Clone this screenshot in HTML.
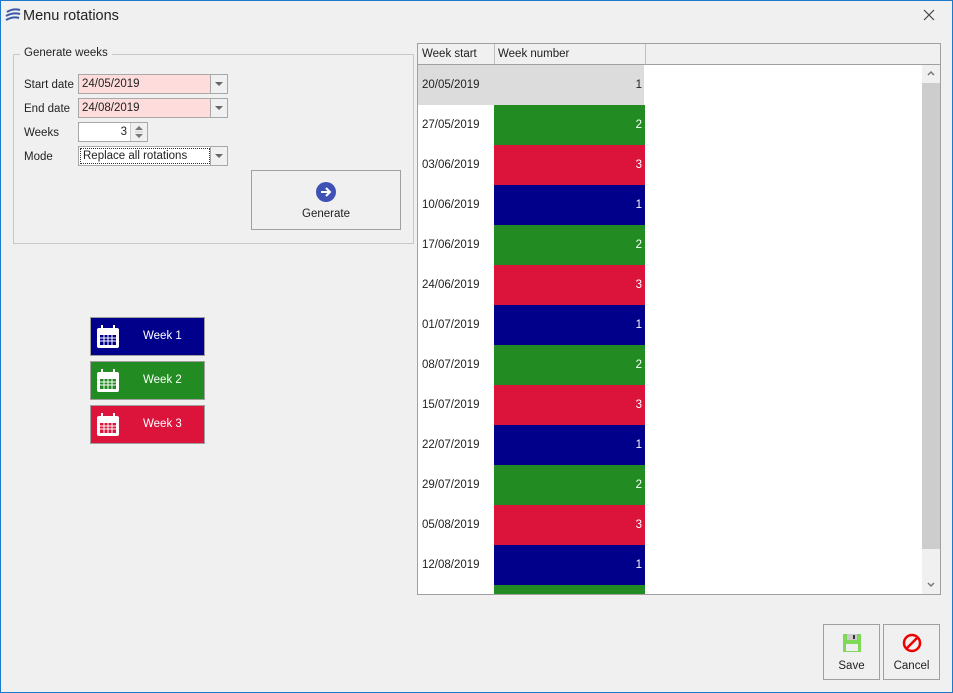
<!DOCTYPE html>
<html><head><style>
body{margin:0;width:953px;height:693px;overflow:hidden;font-family:"Liberation Sans",sans-serif;font-size:11.5px;color:#222;background:#f0f0f0;position:relative;}
.brd{position:absolute;left:0;top:0;width:951px;height:691px;border:1px solid #1979ca;}
.wrap{position:absolute;left:1px;top:1px;width:951px;height:691px;}
.a{position:absolute;}
.lbl{position:absolute;left:24px;}
.inp{position:absolute;left:78px;width:150px;height:20px;border:1px solid #a8a8a8;background:#fff;box-sizing:border-box;}
.inp .t{position:absolute;left:3px;top:3px;}
.dd{position:absolute;right:0;top:0;width:16px;height:18px;border-left:1px solid #a8a8a8;background:#f0f0f0;}
.dd:after{content:"";position:absolute;left:4px;top:7px;border-left:4px solid transparent;border-right:4px solid transparent;border-top:4px solid #666;}
.row{position:absolute;left:0;width:226px;height:40px;}
.row .d{position:absolute;left:4px;top:14px;}
.row .n{position:absolute;left:76px;width:151px;height:40px;color:#fff;text-align:right;box-sizing:border-box;padding-right:3px;line-height:40px;}
.wk{position:absolute;left:90px;width:115px;height:39px;border:1px solid #a0a0a0;box-sizing:border-box;color:#fff;}
.wk span{position:absolute;left:52px;top:12px;}
.wk svg{position:absolute;left:4px;top:6px;}
.btn{position:absolute;border:1px solid #a0a0a0;box-sizing:border-box;background:#f0f0f0;text-align:center;}
</style></head><body><div class="brd"></div><div class="wrap">
<svg class="a" style="left:4px;top:7px" width="16" height="14"><path d="M2 4 Q8 0 15 2 M1 8 Q8 4 15 6 M1 12 Q8 8 14 10" stroke="#3a5aa8" stroke-width="2" fill="none"/></svg>
<div class="a" style="left:22px;top:7px;font-size:14.5px;color:#222">Menu rotations</div>
<svg class="a" style="left:922px;top:8px" width="12" height="12"><path d="M1 1L11 11M11 1L1 11" stroke="#444" stroke-width="1.2"/></svg>

<div class="a" style="left:12px;top:53px;width:399px;height:188px;border:1px solid #c8c8c8;"></div>
<div class="a" style="left:19px;top:46px;background:#f0f0f0;padding:0 4px;">Generate weeks</div>
<div class="lbl" style="left:23px;top:78px">Start date</div>
<div class="inp" style="left:77px;top:73px;background:#ffdcdc"><span class="t">24/05/2019</span><div class="dd"></div></div>
<div class="lbl" style="left:23px;top:102px">End date</div>
<div class="inp" style="left:77px;top:97px;background:#ffdcdc"><span class="t">24/08/2019</span><div class="dd"></div></div>
<div class="lbl" style="left:23px;top:126px">Weeks</div>
<div class="inp" style="left:77px;top:121px;width:70px"><span class="t" style="left:auto;right:20px">3</span>
<div class="a" style="right:0;top:0;width:16px;height:18px;border-left:1px solid #ccc;background:#f0f0f0">
<svg class="a" style="left:4px;top:2px" width="8" height="14"><path d="M0 5L4 1L8 5Z M0 9L4 13L8 9Z" fill="#777"/><path d="M0 7H8" stroke="#ccc"/></svg></div></div>
<div class="lbl" style="left:23px;top:150px">Mode</div>
<div class="inp" style="left:77px;top:145px"><span class="t" style="left:1px;top:1px;border:1px dotted #333;padding:0 2px;width:124px;height:14px;line-height:14px">Replace all rotations</span><div class="dd"></div></div>
<div class="btn" style="left:250px;top:169px;width:150px;height:60px">
<svg style="margin-top:11px" width="20" height="20"><circle cx="10" cy="10" r="10" fill="#3f51b5"/><path d="M5 10H14M10 6L14 10L10 14" stroke="#fff" stroke-width="2" fill="none"/></svg>
<div style="margin-top:3px">Generate</div></div>

<div class="wk" style="left:89px;top:316px;background:#00008b"><svg width="26" height="26"><rect x="2" y="4" width="22" height="20" rx="2" fill="#fff"/><rect x="6" y="1" width="2" height="6" fill="#fff"/><rect x="18" y="1" width="2" height="6" fill="#fff"/><rect x="5" y="11" width="16" height="10" fill="#00008b"/><path d="M5 14H21M5 17H21M9 11V21M13 11V21M17 11V21" stroke="#fff"/></svg><span>Week 1</span></div>
<div class="wk" style="left:89px;top:360px;background:#228b22"><svg width="26" height="26"><rect x="2" y="4" width="22" height="20" rx="2" fill="#fff"/><rect x="6" y="1" width="2" height="6" fill="#fff"/><rect x="18" y="1" width="2" height="6" fill="#fff"/><rect x="5" y="11" width="16" height="10" fill="#228b22"/><path d="M5 14H21M5 17H21M9 11V21M13 11V21M17 11V21" stroke="#fff"/></svg><span>Week 2</span></div>
<div class="wk" style="left:89px;top:404px;background:#dc143c"><svg width="26" height="26"><rect x="2" y="4" width="22" height="20" rx="2" fill="#fff"/><rect x="6" y="1" width="2" height="6" fill="#fff"/><rect x="18" y="1" width="2" height="6" fill="#fff"/><rect x="5" y="11" width="16" height="10" fill="#dc143c"/><path d="M5 14H21M5 17H21M9 11V21M13 11V21M17 11V21" stroke="#fff"/></svg><span>Week 3</span></div>

<div class="a" style="left:416px;top:42px;width:522px;height:550px;border:1px solid #a0a0a0;background:#fff;overflow:hidden">
<div class="a" style="left:0;top:0;width:522px;height:20px;background:#f0f0f0;border-bottom:1px solid #a0a0a0"></div>
<div class="a" style="left:4px;top:4px">Week start</div>
<div class="a" style="left:76px;top:0;height:20px;border-left:1px solid #c0c0c0"></div>
<div class="a" style="left:80px;top:4px">Week number</div>
<div class="a" style="left:227px;top:0;height:20px;border-left:1px solid #c0c0c0"></div>
<div class="a" style="left:0;top:21px;width:520px;height:530px">
<div class="row" style="top:0;background:#dcdcdc"><span class="d">20/05/2019</span><div class="n" style="color:#222">1</div></div>
<div class="row" style="top:40px"><span class="d">27/05/2019</span><div class="n" style="background:#228b22">2</div></div>
<div class="row" style="top:80px"><span class="d">03/06/2019</span><div class="n" style="background:#dc143c">3</div></div>
<div class="row" style="top:120px"><span class="d">10/06/2019</span><div class="n" style="background:#00008b">1</div></div>
<div class="row" style="top:160px"><span class="d">17/06/2019</span><div class="n" style="background:#228b22">2</div></div>
<div class="row" style="top:200px"><span class="d">24/06/2019</span><div class="n" style="background:#dc143c">3</div></div>
<div class="row" style="top:240px"><span class="d">01/07/2019</span><div class="n" style="background:#00008b">1</div></div>
<div class="row" style="top:280px"><span class="d">08/07/2019</span><div class="n" style="background:#228b22">2</div></div>
<div class="row" style="top:320px"><span class="d">15/07/2019</span><div class="n" style="background:#dc143c">3</div></div>
<div class="row" style="top:360px"><span class="d">22/07/2019</span><div class="n" style="background:#00008b">1</div></div>
<div class="row" style="top:400px"><span class="d">29/07/2019</span><div class="n" style="background:#228b22">2</div></div>
<div class="row" style="top:440px"><span class="d">05/08/2019</span><div class="n" style="background:#dc143c">3</div></div>
<div class="row" style="top:480px"><span class="d">12/08/2019</span><div class="n" style="background:#00008b">1</div></div>
<div class="row" style="top:520px"><span class="d"></span><div class="n" style="background:#228b22"></div></div>
</div>
<div class="a" style="left:504px;top:21px;width:18px;height:529px;background:#f0f0f0"></div>
<div class="a" style="left:504px;top:39px;width:18px;height:466px;background:#cdcdcd"></div>
<svg class="a" style="left:509px;top:26px" width="8" height="6"><path d="M1 5L4 2L7 5" stroke="#777" stroke-width="1.5" fill="none"/></svg>
<svg class="a" style="left:509px;top:538px" width="8" height="6"><path d="M1 1L4 4L7 1" stroke="#777" stroke-width="1.5" fill="none"/></svg>
</div>

<div class="btn" style="left:822px;top:623px;width:57px;height:56px">
<svg style="margin-top:8px" width="20" height="20"><rect x="1" y="1" width="18" height="18" fill="#7ed957"/><rect x="5" y="1" width="10" height="6" fill="#ccc"/><rect x="11" y="2" width="2" height="4" fill="#333"/><rect x="4" y="11" width="12" height="7" fill="#eee"/></svg>
<div style="margin-top:4px">Save</div></div>
<div class="btn" style="left:882px;top:623px;width:57px;height:56px">
<svg style="margin-top:8px" width="20" height="20"><circle cx="10" cy="10" r="8" stroke="#e00" stroke-width="2.5" fill="none"/><path d="M4.5 15.5L15.5 4.5" stroke="#e00" stroke-width="2.5"/></svg>
<div style="margin-top:4px">Cancel</div></div>
</div>
</body></html>
